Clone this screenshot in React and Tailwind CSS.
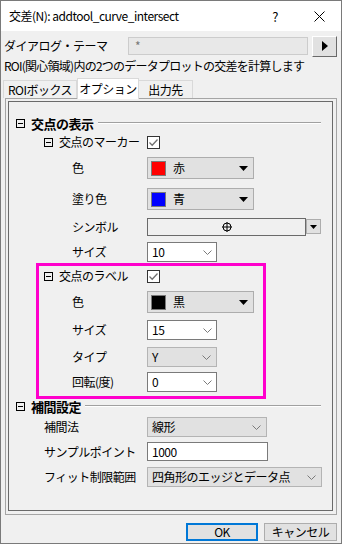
import React from "react";

const FONT = "font-['Noto_Sans_CJK_JP','Noto_Sans',sans-serif] tracking-[-0.5px]";

function Minus() {
  return (
    <div className="w-[9px] h-[9px] border border-black flex items-center justify-center shrink-0">
      <div className="w-[5px] h-px bg-black" />
    </div>
  );
}

function Check() {
  return (
    <div className="w-[13px] h-[13px] border border-[#333333] bg-white flex items-center justify-center shrink-0">
      <svg width="11" height="11" viewBox="0 0 11 11">
        <path d="M1.5 5.5 L4.2 8.2 L9.5 2.5" stroke="#707070" strokeWidth="1.3" fill="none" />
      </svg>
    </div>
  );
}

function DownTri({ w = 9, h = 5 }) {
  return (
    <svg width={w} height={h} viewBox={`0 0 ${w} ${h}`}>
      <polygon points={`0,0 ${w},0 ${w / 2},${h}`} fill="#000" />
    </svg>
  );
}

function Chevron() {
  return (
    <svg width="9" height="5" viewBox="0 0 9 5">
      <path d="M0.5 0.5 L4.5 4.5 L8.5 0.5" stroke="#7a7a7a" strokeWidth="1" fill="none" />
    </svg>
  );
}

function ColorDrop({ swatch, label }) {
  return (
    <div className="w-[107px] h-[22px] bg-[#e1e1e1] border border-[#adadad] flex items-center pl-[3px] pr-[5px]">
      <div className={`w-[15px] h-[15px] border border-[#7a7a7a] ${swatch}`} />
      <span className="ml-[7px] text-[12px] leading-none">{label}</span>
      <div className="ml-auto flex items-center">
        <DownTri />
      </div>
    </div>
  );
}

function EditCombo({ value, w = "w-[70px]" }) {
  return (
    <div className={`${w} h-[20px] bg-white border border-[#7a7a7a] flex items-center pl-[4px] pr-[4px]`}>
      <span className="text-[12px] leading-none">{value}</span>
      <div className="ml-auto flex items-center">
        <Chevron />
      </div>
    </div>
  );
}

function ListCombo({ value, w }) {
  return (
    <div className={`${w} h-[20px] bg-[#e1e1e1] border border-[#b4b4b4] flex items-center pl-[4px] pr-[5px]`}>
      <span className="text-[12px] leading-none">{value}</span>
      <div className="ml-auto flex items-center">
        <Chevron />
      </div>
    </div>
  );
}

function SectionHeader({ title }) {
  return (
    <div className="flex items-center h-[14px] pl-[7px] pr-[11px]">
      <Minus />
      <span className="ml-[6px] text-[13px] font-bold leading-none">{title}</span>
      <div className="flex-1 ml-[4px] h-[2px] border-t border-[#a0a0a0] border-b border-b-white" />
    </div>
  );
}

export default function App() {
  return (
    <div className={`${FONT} w-[342px] h-[544px] border border-[#7a7a7a] bg-[#f0f0f0] text-black flex flex-col overflow-hidden`}>
      {/* Title bar */}
      <div className="h-[30px] bg-white flex items-center pl-[8px] shrink-0">
        <span className="text-[12px] leading-none">交差(N): addtool_curve_intersect</span>
        <span className="ml-auto text-[13px] leading-none">?</span>
        <svg className="ml-[36px] mr-[16px]" width="11" height="11" viewBox="0 0 11 11">
          <path d="M0.5 0.5 L10.5 10.5 M10.5 0.5 L0.5 10.5" stroke="#000" strokeWidth="1" />
        </svg>
      </div>

      {/* Theme row */}
      <div className="flex items-center h-[20px] mt-[5px] pl-[3px]">
        <span className="w-[124px] text-[12px] leading-none">ダイアログ・テーマ</span>
        <div className="w-[180px] h-[18px] bg-[#e8e8e8] border border-[#cccccc] flex items-center pl-[6px]">
          <span className="text-[12px] leading-none text-[#777777]">*</span>
        </div>
        <div className="ml-[4px] w-[25px] h-[21px] bg-[#e1e1e1] border border-t-white border-l-white border-r-[#696969] border-b-[#696969] flex items-center justify-center">
          <svg width="6" height="10" viewBox="0 0 6 10">
            <polygon points="0,0 6,5 0,10" fill="#000" />
          </svg>
        </div>
      </div>

      {/* Description */}
      <div className="h-[16px] mt-[2px] pl-[3px] flex items-center">
        <span className="text-[12px] leading-none tracking-[-0.75px]">ROI(関心領域)内の2つのデータプロットの交差を計算します</span>
      </div>

      {/* Tabs */}
      <div className="flex items-end h-[20px] mt-[4px] pl-[2px] relative z-10">
        <div className="w-[74px] h-[18px] border border-b-0 border-[#d9d9d9] bg-[#f0f0f0] flex items-center justify-center">
          <span className="text-[12px] leading-none">ROIボックス</span>
        </div>
        <div className="w-[62px] h-[21px] -mb-px border border-b-0 border-[#d9d9d9] bg-white flex items-center justify-center">
          <span className="text-[12px] leading-none">オプション</span>
        </div>
        <div className="w-[54px] h-[18px] border border-b-0 border-l-0 border-[#d9d9d9] bg-[#f0f0f0] flex items-center justify-center">
          <span className="text-[12px] leading-none">出力先</span>
        </div>
      </div>

      {/* Panel */}
      <div className="ml-[4px] w-[332px] h-[417px] border border-[#a5a5a5] pt-[2px] pl-[2px] pr-[3px] pb-[3px]">
        <div className="w-[325px] h-[410px] border border-[#6a6a6a] flex flex-col">
          <div className="mt-[14px]">
            <SectionHeader title="交点の表示" />
          </div>

          {/* marker */}
          <div className="flex items-center h-[14px] mt-[5px] pl-[35px]">
            <Minus />
            <span className="ml-[6px] w-[88px] text-[12px] leading-none">交点のマーカー</span>
            <Check />
          </div>

          <div className="flex items-center h-[22px] mt-[8px] pl-[63px]">
            <span className="w-[75px] text-[12px] leading-none">色</span>
            <ColorDrop swatch="bg-[#ff0000]" label="赤" />
          </div>

          <div className="flex items-center h-[22px] mt-[9px] pl-[63px]">
            <span className="w-[75px] text-[12px] leading-none">塗り色</span>
            <ColorDrop swatch="bg-[#0000ff]" label="青" />
          </div>

          <div className="flex items-start h-[18px] mt-[8px] pl-[63px]">
            <span className="w-[75px] h-[18px] flex items-center text-[12px] leading-none">シンボル</span>
            <div className="w-[159px] h-[18px] border border-[#6a6a6a] flex items-center justify-center">
              <svg width="10" height="10" viewBox="0 0 10 10">
                <circle cx="5" cy="5" r="4" stroke="#000" strokeWidth="1" fill="none" />
                <path d="M5 0 L5 10 M0 5 L10 5" stroke="#000" strokeWidth="1" />
              </svg>
            </div>
            <div className="mt-px w-[15px] h-[15px] bg-[#e1e1e1] border border-[#adadad] flex items-center justify-center">
              <DownTri w={7} h={4} />
            </div>
          </div>

          <div className="flex items-center h-[20px] mt-[6px] pl-[63px]">
            <span className="w-[75px] text-[12px] leading-none">サイズ</span>
            <EditCombo value="10" />
          </div>

          {/* highlighted label group */}
          <div className="ml-[27px] mt-[1px] w-[230px] border-[3px] border-[#ff00cc] flex flex-col pb-[4px]">
            <div className="flex items-center h-[14px] mt-[3px] pl-[5px]">
              <Minus />
              <span className="ml-[6px] w-[88px] text-[12px] leading-none">交点のラベル</span>
              <Check />
            </div>
            <div className="flex items-center h-[22px] mt-[8px] pl-[33px]">
              <span className="w-[75px] text-[12px] leading-none">色</span>
              <ColorDrop swatch="bg-black" label="黒" />
            </div>
            <div className="flex items-center h-[20px] mt-[7px] pl-[33px]">
              <span className="w-[75px] text-[12px] leading-none">サイズ</span>
              <EditCombo value="15" />
            </div>
            <div className="flex items-center h-[20px] mt-[7px] pl-[33px]">
              <span className="w-[75px] text-[12px] leading-none">タイプ</span>
              <ListCombo value="Y" w="w-[70px]" />
            </div>
            <div className="flex items-center h-[20px] mt-[5px] pl-[33px]">
              <span className="w-[75px] text-[12px] leading-none">回転(度)</span>
              <EditCombo value="0" />
            </div>
          </div>

          <SectionHeader title="補間設定" />

          <div className="flex items-center h-[20px] mt-[4px] pl-[35px]">
            <span className="w-[103px] text-[12px] leading-none">補間法</span>
            <ListCombo value="線形" w="w-[120px]" />
          </div>

          <div className="flex items-center h-[19px] mt-[5px] pl-[35px]">
            <span className="w-[103px] text-[12px] leading-none">サンプルポイント</span>
            <div className="w-[121px] h-[19px] bg-white border border-[#7a7a7a] flex items-center pl-[4px]">
              <span className="text-[12px] leading-none">1000</span>
            </div>
          </div>

          <div className="flex items-center h-[20px] mt-[6px] pl-[35px]">
            <span className="w-[103px] text-[12px] leading-none">フィット制限範囲</span>
            <ListCombo value="四角形のエッジとデータ点" w="w-[175px]" />
          </div>
        </div>
      </div>

      {/* Buttons */}
      <div className="flex justify-end gap-[6px] pr-[4px] mt-[8px]">
        <div className="w-[72px] h-[18px] bg-[#e1e1e1] border-2 border-[#0078d7] flex items-center justify-center">
          <span className="text-[12px] leading-none">OK</span>
        </div>
        <div className="w-[73px] h-[18px] bg-[#e1e1e1] border border-[#adadad] flex items-center justify-center">
          <span className="text-[12px] leading-none">キャンセル</span>
        </div>
      </div>
    </div>
  );
}
